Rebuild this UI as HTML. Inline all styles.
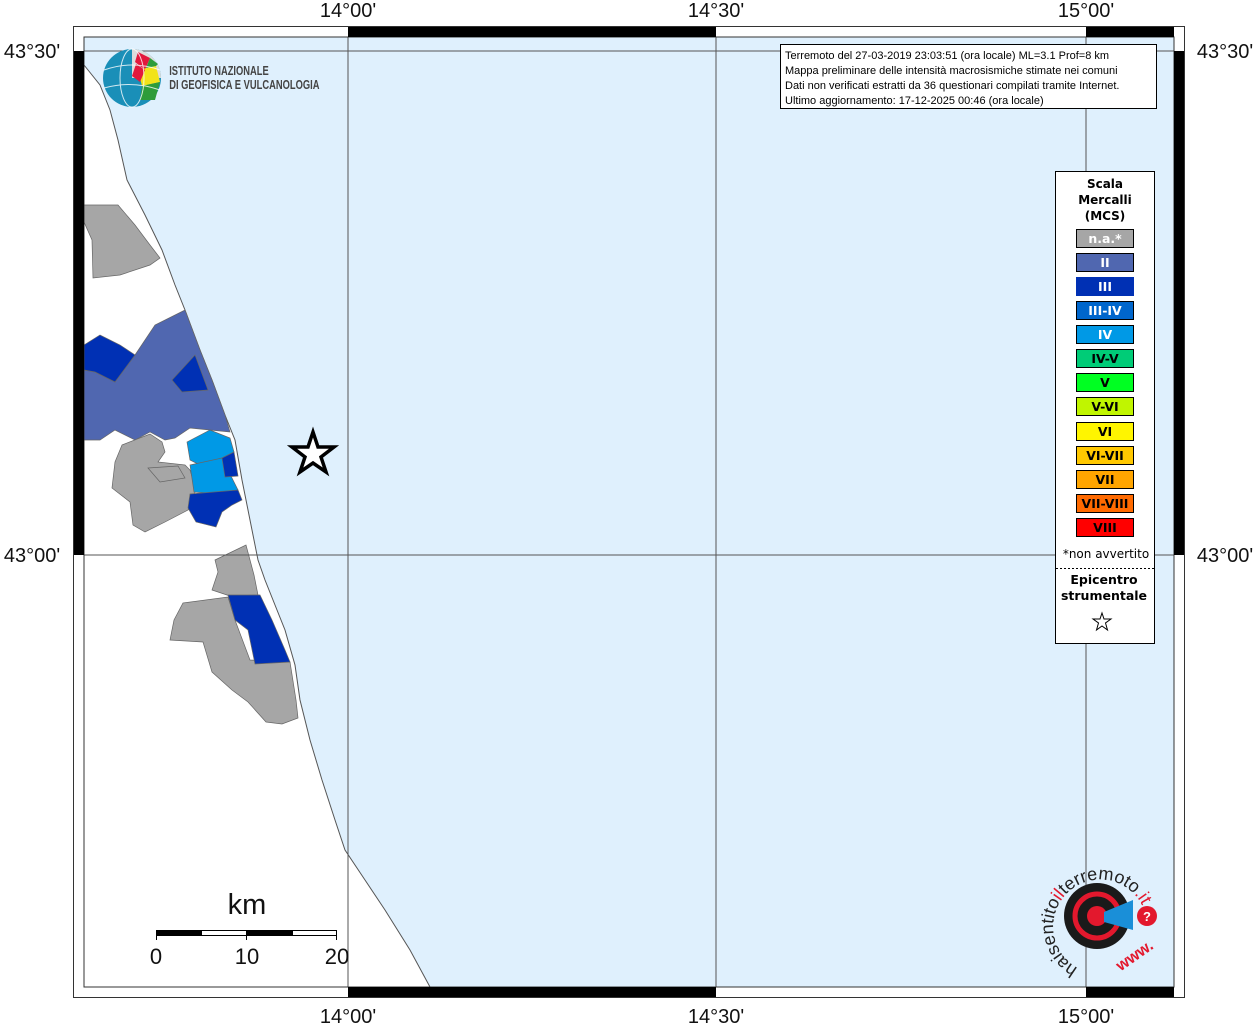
<!DOCTYPE html>
<html><head><meta charset="utf-8"><style>
html,body{margin:0;padding:0;background:#fff;}
svg{display:block;font-family:"Liberation Sans",sans-serif;}
</style></head><body>
<svg width="1257" height="1024" viewBox="0 0 1257 1024" xmlns="http://www.w3.org/2000/svg">
<rect x="84" y="37" width="1090" height="950" fill="#dff0fd"/>
<path d="M84,65 L100,85 L110,110 L118,140 L127,180 L145,215 L162,250 L175,285 L185,310 L200,350 L212,380 L225,415 L235,440 L242,480 L252,530 L258,560 L265,580 L275,605 L285,630 L295,665 L300,700 L310,740 L322,780 L335,820 L345,850 L365,880 L385,910 L410,950 L430,987 L84,987 Z" fill="#fff"/>
<path d="M84,65 L100,85 L110,110 L118,140 L127,180 L145,215 L162,250 L175,285 L185,310 L200,350 L212,380 L225,415 L235,440 L242,480 L252,530 L258,560 L265,580 L275,605 L285,630 L295,665 L300,700 L310,740 L322,780 L335,820 L345,850 L365,880 L385,910 L410,950 L430,987" fill="none" stroke="#555" stroke-width="1"/>
<g stroke="#666" stroke-width="0.7">
<path d="M84,205 L118,205 L135,225 L150,245 L160,258 L150,265 L120,275 L93,278 L92,240 L84,222 Z" fill="#a6a6a6"/>
<path d="M84,370 L95,372 L115,382 L135,355 L155,325 L185,310 L200,350 L212,380 L225,415 L230,432 L210,430 L190,428 L175,438 L165,440 L150,432 L135,440 L115,430 L100,440 L84,440 Z" fill="#5067b0"/>
<path d="M84,345 L100,335 L120,345 L135,355 L115,382 L95,372 L84,370 Z" fill="#0030b4"/>
<path d="M172,380 L195,355 L208,390 L182,392 Z" fill="#0030b4"/>
<path d="M122,445 L150,434 L162,442 L165,452 L158,462 L185,465 L190,470 L196,490 L188,510 L165,522 L145,532 L133,525 L130,502 L112,488 L115,462 Z" fill="#a6a6a6"/>
<path d="M148,468 L178,466 L185,478 L160,482 Z" fill="#a6a6a6"/>
<path d="M187,442 L210,430 L230,438 L234,452 L222,458 L200,465 L190,460 Z" fill="#0099e6"/>
<path d="M190,465 L222,458 L238,490 L220,494 L194,492 Z" fill="#0099e6"/>
<path d="M222,458 L234,452 L238,476 L225,477 Z" fill="#0030b4"/>
<path d="M190,494 L238,490 L242,500 L232,505 L222,512 L216,527 L196,522 L188,508 Z" fill="#0030b4"/>
<path d="M215,560 L246,545 L254,575 L258,595 L230,596 L212,590 L218,572 Z" fill="#a6a6a6"/>
<path d="M183,603 L228,597 L235,620 L250,660 L290,662 L296,700 L298,718 L282,724 L266,722 L248,702 L232,690 L212,672 L203,642 L170,640 L174,620 Z" fill="#a6a6a6"/>
<path d="M228,595 L260,595 L272,620 L285,650 L290,662 L255,664 L248,630 L235,620 Z" fill="#0030b4"/>
</g>
<g stroke="#555" stroke-width="1">
<line x1="348" y1="37" x2="348" y2="987"/>
<line x1="716" y1="37" x2="716" y2="987"/>
<line x1="1086" y1="37" x2="1086" y2="987"/>
<line x1="84" y1="51" x2="1174" y2="51"/>
<line x1="84" y1="555" x2="1174" y2="555"/>
</g>
<rect x="73.5" y="26.5" width="1111" height="971" fill="none" stroke="#333" stroke-width="1"/>
<rect x="84" y="37" width="1090" height="950" fill="none" stroke="#333" stroke-width="1"/>
<g fill="#000">
<rect x="348" y="27" width="368" height="10"/><rect x="1086" y="27" width="88" height="10"/>
<rect x="348" y="987" width="368" height="10"/><rect x="1086" y="987" width="88" height="10"/>
<rect x="74" y="51" width="10" height="504"/><rect x="1174" y="51" width="10" height="504"/>
</g>
<g font-size="20" fill="#111" text-anchor="middle">
<text x="348" y="17">14°00'</text><text x="716" y="17">14°30'</text><text x="1086" y="17">15°00'</text>
<text x="348" y="1023">14°00'</text><text x="716" y="1023">14°30'</text><text x="1086" y="1023">15°00'</text>
<text x="32" y="58">43°30'</text><text x="32" y="562">43°00'</text>
<text x="1225" y="58">43°30'</text><text x="1225" y="562">43°00'</text>
</g>
<rect x="780.5" y="44.5" width="376" height="64" fill="#fff" stroke="#000"/>
<g font-size="11" fill="#000">
<text x="785" y="59">Terremoto del 27-03-2019 23:03:51 (ora locale) ML=3.1 Prof=8 km</text>
<text x="785" y="74">Mappa preliminare delle intensità macrosismiche stimate nei comuni</text>
<text x="785" y="89">Dati non verificati estratti da 36 questionari compilati tramite Internet.</text>
<text x="785" y="104">Ultimo aggiornamento: 17-12-2025 00:46 (ora locale)</text>
</g>
<circle cx="132" cy="78" r="29" fill="#1a8fb8"/>
<path d="M132,49 A29,29 0 0 1 161,78 L132,78 Z" fill="#ddd"/>
<path d="M138,52 L150,58 L145,70 L135,62Z" fill="#e3183d"/>
<path d="M138,70 L156,66 L160,82 L142,86Z" fill="#f2e31a"/>
<path d="M142,86 L160,82 L155,100 L140,100Z" fill="#2e9c3a"/>
<path d="M150,58 L158,64 L156,66 L146,68Z" fill="#2e9c3a"/>
<path d="M136,64 L145,70 L140,82 L132,76Z" fill="#e3183d"/>
<g stroke="#fff" stroke-width="1" fill="none" opacity="0.8">
<ellipse cx="132" cy="78" rx="12" ry="29"/><path d="M104,70 Q132,60 160,70 M104,88 Q132,80 160,90"/>
</g>
<g font-size="13" font-weight="bold" fill="#444" transform="scale(0.72,1)">
<text x="235" y="75">ISTITUTO NAZIONALE</text>
<text x="235" y="89">DI GEOFISICA E VULCANOLOGIA</text>
</g>
<path d="M313,432 L318,447 L334,447 L321,457 L326,472 L313,463 L300,472 L305,457 L292,447 L308,447 Z" fill="#fff" stroke="#000" stroke-width="3.5"/>
<rect x="1055.5" y="171.5" width="99" height="472" fill="#fff" stroke="#000"/>
<g font-family="'DejaVu Sans',sans-serif" font-weight="bold" font-size="12" text-anchor="middle" fill="#000">
<text x="1105" y="188">Scala</text><text x="1105" y="204">Mercalli</text><text x="1105" y="220">(MCS)</text>
</g>
<g font-family="'DejaVu Sans',sans-serif" font-weight="bold" font-size="12.5" text-anchor="middle" stroke="#000" stroke-width="0">
<rect x="1076.5" y="229.5" width="57" height="18" fill="#a6a6a6" stroke-width="1"/><text x="1105" y="243" fill="#fff">n.a.*</text>
<rect x="1076.5" y="253.5" width="57" height="18" fill="#5067b0" stroke-width="1"/><text x="1105" y="267" fill="#fff">II</text>
<rect x="1076" y="277" width="58" height="19" fill="#0030b4"/><text x="1105" y="291" fill="#fff">III</text>
<rect x="1076.5" y="301.5" width="57" height="18" fill="#0066cc" stroke-width="1"/><text x="1105" y="315" fill="#fff">III-IV</text>
<rect x="1076.5" y="325.5" width="57" height="18" fill="#0099e6" stroke-width="1"/><text x="1105" y="339" fill="#fff">IV</text>
<rect x="1076.5" y="349.5" width="57" height="18" fill="#00cc77" stroke-width="1"/><text x="1105" y="363" fill="#000">IV-V</text>
<rect x="1076.5" y="373.5" width="57" height="18" fill="#00ff22" stroke-width="1"/><text x="1105" y="387" fill="#000">V</text>
<rect x="1076.5" y="397.5" width="57" height="18" fill="#c0f500" stroke-width="1"/><text x="1105" y="411" fill="#000">V-VI</text>
<rect x="1076.5" y="422.5" width="57" height="18" fill="#fff500" stroke-width="1"/><text x="1105" y="436" fill="#000">VI</text>
<rect x="1076.5" y="446.5" width="57" height="18" fill="#ffc800" stroke-width="1"/><text x="1105" y="460" fill="#000">VI-VII</text>
<rect x="1076.5" y="470.5" width="57" height="18" fill="#ffa500" stroke-width="1"/><text x="1105" y="484" fill="#000">VII</text>
<rect x="1076.5" y="494.5" width="57" height="18" fill="#ff6a00" stroke-width="1"/><text x="1105" y="508" fill="#000">VII-VIII</text>
<rect x="1076.5" y="518.5" width="57" height="18" fill="#ff0000" stroke-width="1"/><text x="1105" y="532" fill="#000">VIII</text>
</g>
<text x="1106" y="558" font-family="'DejaVu Sans',sans-serif" font-size="12" text-anchor="middle">*non avvertito</text>
<line x1="1056" y1="568.5" x2="1154" y2="568.5" stroke="#000" stroke-dasharray="2,2"/>
<g font-family="'DejaVu Sans',sans-serif" font-weight="bold" font-size="12.5" text-anchor="middle">
<text x="1104" y="584">Epicentro</text><text x="1104" y="600">strumentale</text>
</g>
<path d="M1102,613 L1104,619 L1111,619 L1105.5,623 L1107.5,630 L1102,626 L1096.5,630 L1098.5,623 L1093,619 L1100,619 Z" fill="#fff" stroke="#000" stroke-width="1"/>
<text x="247" y="914" font-size="29" text-anchor="middle" fill="#111">km</text>
<rect x="156.5" y="930.5" width="180" height="5" fill="#fff" stroke="#000"/>
<rect x="156" y="930" width="46" height="6" fill="#000"/><rect x="247" y="930" width="46" height="6" fill="#000"/>
<g stroke="#000"><line x1="156.5" y1="930" x2="156.5" y2="940"/><line x1="246.5" y1="930" x2="246.5" y2="940"/><line x1="336.5" y1="930" x2="336.5" y2="940"/></g>
<g font-size="22" fill="#111" text-anchor="middle"><text x="156" y="964">0</text><text x="247" y="964">10</text><text x="337" y="964">20</text></g>
<circle cx="1097" cy="916" r="33" fill="#1a1a1a"/>
<circle cx="1097" cy="916" r="22" fill="none" stroke="#e3182d" stroke-width="5"/>
<circle cx="1097" cy="916" r="10" fill="#e3182d"/>
<path d="M1104,912 L1133,900 L1133,930 L1104,922 Z" fill="#1a8fd8"/>
<circle cx="1147" cy="916" r="10" fill="#e3182d"/>
<text x="1147" y="921" font-size="13" fill="#fff" text-anchor="middle" font-weight="bold">?</text>
<defs><path id="arc" d="M1078,968 A47,47 0 1 1 1142,948"/></defs>
<text font-size="18" fill="#222"><textPath href="#arc">haisentito<tspan fill="#e3182d">il</tspan>terremoto<tspan fill="#e3182d">.it</tspan></textPath></text>
<text x="1112" y="966" font-size="16" fill="#e3182d" font-weight="bold" transform="rotate(-35 1125 955)">www.</text>
</svg>
</body></html>
